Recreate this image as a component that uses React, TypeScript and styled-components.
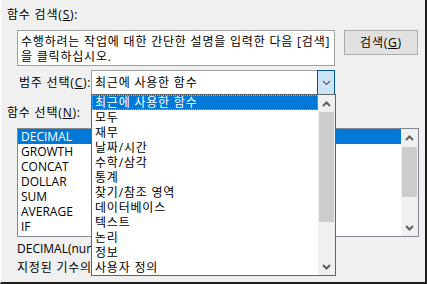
import React from "react";
import styled, { createGlobalStyle } from "styled-components";

const GlobalStyle = createGlobalStyle`
	html, body {
		margin: 0;
		padding: 0;
		background: #f0f0f0;
	}
	* {
		box-sizing: border-box;
	}
`;

const Dialog = styled.div`
	position: relative;
	display: flex;
	flex-direction: column;
	width: 427px;
	height: 284px;
	padding: 7px 0 0 6px;
	background: #f0f0f0;
	border-left: 1px solid #ffffff;
	border-right: 2px solid #1e1e1e;
	border-bottom: 2px solid #1e1e1e;
	overflow: hidden;
	color: #000;
	font-family: "Open Sans", "Noto Sans CJK KR", sans-serif;
	font-size: 12px;
	line-height: 15px;
	letter-spacing: 0.8px;
`;

const Label = styled.div<{ $top?: number }>`
	margin-top: ${(p) => p.$top || 0}px;
	white-space: nowrap;
`;

const SearchRow = styled.div`
	display: flex;
	align-items: flex-start;
	gap: 9px;
	margin: 8px 0 0 10px;
`;

const SearchBox = styled.div`
	width: 318px;
	height: 36px;
	padding: 3px 3px;
	background: #fff;
	border: 1px solid #a0a0a0;
	white-space: nowrap;
`;

const Button = styled.div`
	display: flex;
	align-items: center;
	justify-content: center;
	width: 74px;
	height: 25px;
	background: #e1e1e1;
	border: 1px solid #adadad;
`;

const CategoryRow = styled.div`
	display: flex;
	align-items: center;
	margin: 4px 0 0 12px;
`;

const CategoryLabel = styled.div`
	width: 72px;
	white-space: nowrap;
`;

const Combo = styled.div`
	display: flex;
	width: 244px;
	height: 25px;
`;

const ComboField = styled.div`
	flex: 1;
	padding: 4px 3px 0;
	background: #fff;
	border: 1px solid #a0a0a0;
	border-right: none;
`;

const ComboButton = styled.div`
	display: flex;
	align-items: center;
	justify-content: center;
	width: 18px;
	background: #cce4f7;
	border: 1px solid #005499;
`;

const ListBox = styled.div`
	display: flex;
	width: 402px;
	height: 109px;
	margin: 8px 0 0 10px;
	background: #fff;
	border: 1px solid #828790;
	letter-spacing: 0;
`;

const Items = styled.div<{ $pad: number }>`
	flex: 1;
	display: flex;
	flex-direction: column;
	& > div {
		height: 15px;
		padding-left: ${(p) => p.$pad}px;
		white-space: nowrap;
	}
`;

const Item = styled.div<{ $selected?: boolean; $focus?: boolean }>`
	background: ${(p) => (p.$selected ? "#0078d7" : "transparent")};
	color: ${(p) => (p.$selected ? "#fff" : "#000")};
	outline: ${(p) => (p.$focus ? "1px dotted #f59a3c" : "none")};
	outline-offset: -1px;
`;

const Scrollbar = styled.div`
	display: flex;
	flex-direction: column;
	width: 17px;
	background: #f0f0f0;
`;

const ScrollArrow = styled.div`
	display: flex;
	align-items: center;
	justify-content: center;
	height: 17px;
	flex-shrink: 0;
`;

const Thumb = styled.div<{ $top: number; $height: number }>`
	margin: ${(p) => p.$top}px 1px 0;
	height: ${(p) => p.$height}px;
	background: #cdcdcd;
`;

const Track = styled.div`
	flex: 1;
`;

const Syntax = styled.div`
	margin: 2px 0 0 10px;
	line-height: 19px;
	white-space: nowrap;
`;

const Latin = styled.span`
	letter-spacing: 0;
`;

const Dropdown = styled.div`
	position: absolute;
	left: 90px;
	top: 94px;
	display: flex;
	width: 245px;
	height: 182px;
	background: #fff;
	border: 1px solid #646464;
`;

const Chevron = ({ up, bold }: { up?: boolean; bold?: boolean }) => (
	<svg width="9" height="6" viewBox="0 0 9 6">
		<path
			d={up ? "M1 5 L4.5 1.5 L8 5" : "M1 1 L4.5 4.5 L8 1"}
			fill="none"
			stroke="#606060"
			strokeWidth={bold ? 2 : 1.1}
		/>
	</svg>
);

const ScrollBar = ({ top, height }: { top: number; height: number }) => (
	<Scrollbar>
		<ScrollArrow>
			<Chevron up bold />
		</ScrollArrow>
		<Thumb $top={top} $height={height} />
		<Track />
		<ScrollArrow>
			<Chevron bold />
		</ScrollArrow>
	</Scrollbar>
);

const functions = ["DECIMAL", "GROWTH", "CONCAT", "DOLLAR", "SUM", "AVERAGE", "IF"];

const categories = [
	"최근에 사용한 함수",
	"모두",
	"재무",
	"날짜/시간",
	"수학/삼각",
	"통계",
	"찾기/참조 영역",
	"데이터베이스",
	"텍스트",
	"논리",
	"정보",
	"사용자 정의",
];

const App: React.FC = () => {
	return (
		<>
			<GlobalStyle />
			<Dialog>
				<Label>
					함수 검색(<u>S</u>):
				</Label>
				<SearchRow>
					<SearchBox>
						수행하려는 작업에 대한 간단한 설명을 입력한 다음 [검색]
						<br />을 클릭하십시오.
					</SearchBox>
					<Button>
						검색(<u>G</u>)
					</Button>
				</SearchRow>
				<CategoryRow>
					<CategoryLabel>
						범주 선택(<u>C</u>):
					</CategoryLabel>
					<Combo>
						<ComboField>최근에 사용한 함수</ComboField>
						<ComboButton>
							<Chevron />
						</ComboButton>
					</Combo>
				</CategoryRow>
				<Label $top={10}>
					함수 선택(<u>N</u>):
				</Label>
				<ListBox>
					<Items $pad={3}>
						{functions.map((f, i) => (
							<Item key={f} $selected={i === 0}>
								{f}
							</Item>
						))}
					</Items>
					<ScrollBar top={1} height={50} />
				</ListBox>
				<Syntax>
					<Latin>DECIMAL(number,radix)</Latin>
					<br />
					지정된 기수의 텍스트 표현을 10진수로 변환합니다.
				</Syntax>
				<Dropdown>
					<Items $pad={3}>
						{categories.map((c, i) => (
							<Item key={c} $selected={i === 0} $focus={i === 0}>
								{c}
							</Item>
						))}
					</Items>
					<ScrollBar top={0} height={110} />
				</Dropdown>
			</Dialog>
		</>
	);
};

export default App;
